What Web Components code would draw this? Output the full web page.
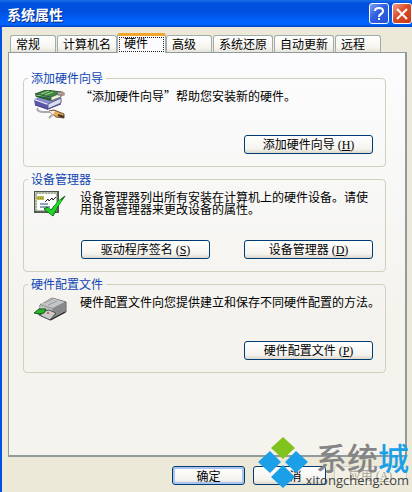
<!DOCTYPE html>
<html lang="zh-CN">
<head>
<meta charset="utf-8">
<title>系统属性</title>
<style>
  body {
    margin: 0;
    font-family: "Noto Sans CJK SC", sans-serif;
    font-size: 12px;
    line-height: 12px;
    color: #000;
  }
</style>
</head>
<body>

<xp-window caption="系统属性">
  <xp-tabs slot="tabs">
    <xp-tab>常规</xp-tab>
    <xp-tab>计算机名</xp-tab>
    <xp-tab selected>硬件</xp-tab>
    <xp-tab>高级</xp-tab>
    <xp-tab>系统还原</xp-tab>
    <xp-tab>自动更新</xp-tab>
    <xp-tab>远程</xp-tab>
  </xp-tabs>

  <xp-group caption="添加硬件向导">
    <svg slot="icon" width="34" height="30" viewBox="0 0 34 30">
      <path d="M4 18q-2 3 4 4l8 0q5 1 1 4l-2 2" fill="none" stroke="#a9a9ae" stroke-width="2"/>
      <path d="M0 10l14 5v5L1 15z" fill="#5b57a8"/>
      <path d="M0 9l13-4 14 3-13 6z" fill="#8d8bd0"/>
      <path d="M14 14l13-6v5l-13 6z" fill="#dcdcf0" stroke="#5c5a98"/>
      <path d="M1 15l13 4 13-5" fill="none" stroke="#4b478e"/>
      <path d="M1 4l11-4 15 2-10 5z" fill="#3c8b3c" stroke="#27582d"/>
      <path d="M1 5l16 3v3L2 7z" fill="#23642b"/>
      <path d="M17 7l10-4v4l-10 4z" fill="#e9efe7" stroke="#566b56"/>
      <path d="M7 4l8-3M11 5l8-3" stroke="#a9cf9b"/>
      <path d="M23 2h6v3h-5z" fill="#b8b8b4" stroke="#666"/>
      <circle cx="29" cy="4" r="2" fill="#b98f88"/>
      <path d="M15 21l5-1 10 4v4l-8-1z" fill="#e5ad55" stroke="#705032"/>
      <path d="M15 21l4 4 2-4z" fill="#eee"/>
      <path d="M24 25l6 2" stroke="#403028" stroke-width="2"/>
    </svg>
    “添加硬件向导”帮助您安装新的硬件。
    <xp-button slot="actions" wide>添加硬件向导<xp-key>H</xp-key></xp-button>
  </xp-group>

  <xp-group caption="设备管理器" tall>
    <svg slot="icon" width="34" height="30" viewBox="0 0 34 30">
      <path d="M0 0h25v22H0z" fill="#4b5650"/>
      <path d="M1 1h22v19H1z" fill="#c9cfbd"/>
      <path d="M3 3h19v16H3z" fill="#fff"/>
      <path d="M2 2h21v18H2z" fill="none" stroke="#8a957f" stroke-dasharray="2 1"/>
      <path d="M3 5h7v4H3z" fill="#c3bc45"/>
      <path d="M4 7h5" stroke="#62601f" stroke-dasharray="1 1"/>
      <path d="M11 11l3-3 1 2 3-3 1 2 3-3" fill="none" stroke="#222"/>
      <path d="M6 13h8M6 16h10" stroke="#28437b"/>
      <path d="M10 18l3-2 4 3q6-9 14-14-7 9-12 20z" fill="#20c626" stroke="#0b6417"/>
      <path d="M13 18l5 4q4-8 9-13" fill="none" stroke="#22d626" stroke-width="3"/>
    </svg>
    设备管理器列出所有安装在计算机上的硬件设备。请使<br>用设备管理器来更改设备的属性。
    <xp-button slot="actions" wide>驱动程序签名<xp-key>S</xp-key></xp-button>
    <xp-button slot="actions" wide>设备管理器<xp-key>D</xp-key></xp-button>
  </xp-group>

  <xp-group caption="硬件配置文件">
    <svg slot="icon" width="34" height="30" viewBox="0 0 34 30">
      <path d="M6 9L18 2l14 4v10L17 24 5 19z" fill="#999a9b" stroke="#5c5e60"/>
      <path d="M6 8L18 2l13 4-12 6z" fill="#c4c5c6"/>
      <path d="M10 7l9-4M14 9l9-4" stroke="#999"/>
      <path d="M19 12l12-6v10l-12 6z" fill="#88898b"/>
      <path d="M6 9l12 4v4L5 12z" fill="#bfc0c0"/>
      <path d="M6 13l16 5-5 4-13-4z" fill="#303236"/>
      <path d="M7 16l8-2 7 3-6 7-9-4z" fill="#c8c9ca" stroke="#555"/>
      <path d="M0 17l5-4h7l-2 4-5 1z" fill="#2bb52d" stroke="#145c19"/>
      <circle cx="14" cy="17" r="1" fill="#dd3d36"/>
      <path d="M16 24l15-8" stroke="#222"/>
    </svg>
    硬件配置文件向您提供建立和保存不同硬件配置的方法。
    <xp-button slot="actions" wide>硬件配置文件<xp-key>P</xp-key></xp-button>
  </xp-group>

  <xp-button slot="footer" default>确定</xp-button>
  <xp-button slot="footer">取消</xp-button>
  <xp-button slot="footer" disabled>应用<xp-key>A</xp-key></xp-button>
</xp-window>

<site-mark></site-mark>

<script>
function attach(el, html) {
  const template = document.createElement('template');
  template.innerHTML = html;
  const root = el.attachShadow({ mode: 'open' });
  root.appendChild(template.content.cloneNode(true));
  return root;
}

class XpWindow extends HTMLElement {
  constructor() {
    super();
    attach(this, `
      <style>
        :host {
          display: flex;
          flex-direction: column;
          min-height: 100vh;
          box-sizing: border-box;
          background: #ece9d8;
          overflow: hidden;
        }
        header {
          display: flex;
          align-items: center;
          gap: 3px;
          height: 27px;
          padding-left: 7px;
          background: linear-gradient(#1b6fe8, #0052dd 12%, #0050e0 45%, #0060fa 75%, #0064ff 90%, #003fc4);
        }
        h1 {
          flex: 1;
          margin: 0;
          font-size: 14px;
          line-height: 20px;
          font-weight: bold;
          color: #fff;
          text-shadow: 1px 1px #0b2a86;
        }
        header button {
          width: 20px;
          height: 21px;
          padding: 0;
          border: 1px solid #fff;
          border-radius: 3px;
          background: linear-gradient(135deg, #7fa0f4, #2f5fdf 45%, #2453d3);
        }
        header .close {
          background: linear-gradient(135deg, #f0a088, #dc4a26 45%, #c63a16);
        }
        header svg { display: block; margin: auto; }
        .frame {
          flex: 1;
          display: flex;
          flex-direction: column;
          padding: 6px 5px 7px 6px;
          border-left: 2px solid #0052e4;
        }
        main {
          flex: 1;
          display: flex;
          flex-direction: column;
          gap: 6px;
          padding: 19px 19px 19px 14px;
          border: 1px solid #919b9c;
          border-width: 1px 2px 2px 1px;
          background: linear-gradient(#fcfcfe, #f4f3ee 65%);
        }
        footer {
          display: flex;
          justify-content: flex-end;
          gap: 8px;
          padding-top: 9px;
        }
      </style>
      <header>
        <h1></h1>
        <button aria-label="帮助">
          <svg width="18" height="18" viewBox="0 0 18 18"><path d="M5 6q0-3 4-3t4 3q0 2-2 3t-2 3M9 13v2" fill="none" stroke="#fff" stroke-width="2"/></svg>
        </button>
        <button class="close" aria-label="关闭">
          <svg width="18" height="18" viewBox="0 0 18 18"><path d="M4 4l10 10M14 4L4 14" stroke="#fff" stroke-width="2"/></svg>
        </button>
      </header>
      <div class="frame">
        <slot name="tabs"></slot>
        <main><slot></slot></main>
        <footer><slot name="footer"></slot></footer>
      </div>
    `).querySelector('h1').textContent = this.getAttribute('caption');
  }
}

class XpTabs extends HTMLElement {
  constructor() {
    super();
    attach(this, `
      <style>
        :host { display: block; }
        div {
          display: flex;
          align-items: flex-end;
          gap: 1px;
          padding-left: 2px;
        }
      </style>
      <div role="tablist"><slot></slot></div>
    `);
  }
}

class XpTab extends HTMLElement {
  constructor() {
    super();
    const root = attach(this, `
      <style>
        :host { display: block; }
        button {
          display: block;
          min-width: 46px;
          height: 17px;
          padding: 0 5px;
          border: 1px solid #a3acad;
          border-bottom: 0;
          border-radius: 3px 3px 0 0;
          background: linear-gradient(#fff, #f6f5ef 70%, #e6e4da);
          font: inherit;
          line-height: 16px;
          color: inherit;
          text-align: left;
        }
        /* the open tab rises over the row and covers the panel's top border */
        :host([selected]) button {
          min-width: 49px;
          height: 20px;
          margin: 0 -1px -1px;
          padding: 0 1px 1px;
          border-top: 3px solid #f0a52c;
          background: #fcfcfe;
          position: relative;
        }
        :host([selected]) span {
          display: block;
          padding: 0 4px 3px;
          border: 1px dotted #222;
          line-height: 10px;
        }
      </style>
      <button role="tab"><span><slot></slot></span></button>
    `);
    root.querySelector('button').setAttribute('aria-selected', this.hasAttribute('selected'));
  }
}

class XpGroup extends HTMLElement {
  constructor() {
    super();
    attach(this, `
      <style>
        :host { display: block; }
        fieldset {
          min-width: 0;
          margin: 0;
          padding: 0;
          border: 1px solid #d0d0bf;
          border-radius: 4px;
        }
        legend {
          margin-left: 4px;
          padding: 0 3px;
          color: #1046b4;
        }
        .body {
          display: flex;
          flex-direction: column;
          justify-content: space-between;
          box-sizing: border-box;
          min-height: 82px;
          padding: 6px 4px 12px 10px;
        }
        :host([tall]) .body { min-height: 86px; }
        .info {
          display: flex;
          align-items: flex-start;
          gap: 12px;
          height: 30px;
        }
        p { flex: 1; margin: 0; }
        .actions {
          display: flex;
          justify-content: flex-end;
          gap: 34px;
          padding-right: 8px;
        }
      </style>
      <fieldset>
        <legend></legend>
        <div class="body">
          <div class="info"><slot name="icon"></slot><p><slot></slot></p></div>
          <div class="actions"><slot name="actions"></slot></div>
        </div>
      </fieldset>
    `).querySelector('legend').textContent = this.getAttribute('caption');
  }
}

class XpButton extends HTMLElement {
  constructor() {
    super();
    const root = attach(this, `
      <style>
        :host { display: block; }
        button {
          display: block;
          min-width: 73px;
          height: 19px;
          padding: 0 4px;
          border: 1px solid #003c74;
          border-radius: 3px;
          background: linear-gradient(#fff, #f4f3ee 75%, #dcd8cc);
          font: inherit;
          color: inherit;
          white-space: nowrap;
        }
        :host([wide]) button { min-width: 129px; }
        :host([default]) button { box-shadow: inset 0 0 0 2px #a9c4f0; }
        button:disabled {
          border-color: #d3d0c2;
          background: #f3f1e6;
          color: #a5a292;
        }
      </style>
      <button><slot></slot></button>
    `);
    root.querySelector('button').disabled = this.hasAttribute('disabled');
  }
}

// access key shown after a button's label
class XpKey extends HTMLElement {
  constructor() {
    super();
    attach(this, `
      <style>
        :host {
          display: inline;
          font-family: "Liberation Serif", serif;
        }
      </style>(<u><slot></slot></u>)`);
  }
}

class SiteMark extends HTMLElement {
  constructor() {
    super();
    attach(this, `
      <style>
        :host {
          display: flex;
          align-items: flex-end;
          position: absolute;
          right: 3px;
          bottom: 4px;
          pointer-events: none;
        }
        svg { margin-right: -3px; }
        div { text-align: right; }
        b {
          display: block;
          font-size: 31px;
          line-height: 30px;
          font-weight: 500;
          color: #858585;
        }
        i { font-style: normal; color: #1ba0e8; }
        small {
          display: block;
          font-family: "Open Sans", sans-serif;
          font-size: 13px;
          line-height: 16px;
          color: #444;
        }
      </style>
      <svg width="50" height="51" viewBox="0 0 50 51">
        <path d="M25 0l12 11-12 11-12-11z" fill="#80c31c"/>
        <path d="M12 14l11 11-11 11L0 25zM38 14l12 11-12 11-11-11zM25 28l12 12-12 11-12-11z" fill="#1ba0e8"/>
      </svg>
      <div><b>系统<i>城</i></b><small>xitongcheng.com</small></div>
    `);
  }
}

customElements.define('xp-window', XpWindow);
customElements.define('xp-tabs', XpTabs);
customElements.define('xp-tab', XpTab);
customElements.define('xp-group', XpGroup);
customElements.define('xp-button', XpButton);
customElements.define('xp-key', XpKey);
customElements.define('site-mark', SiteMark);
</script>
</body>
</html>
